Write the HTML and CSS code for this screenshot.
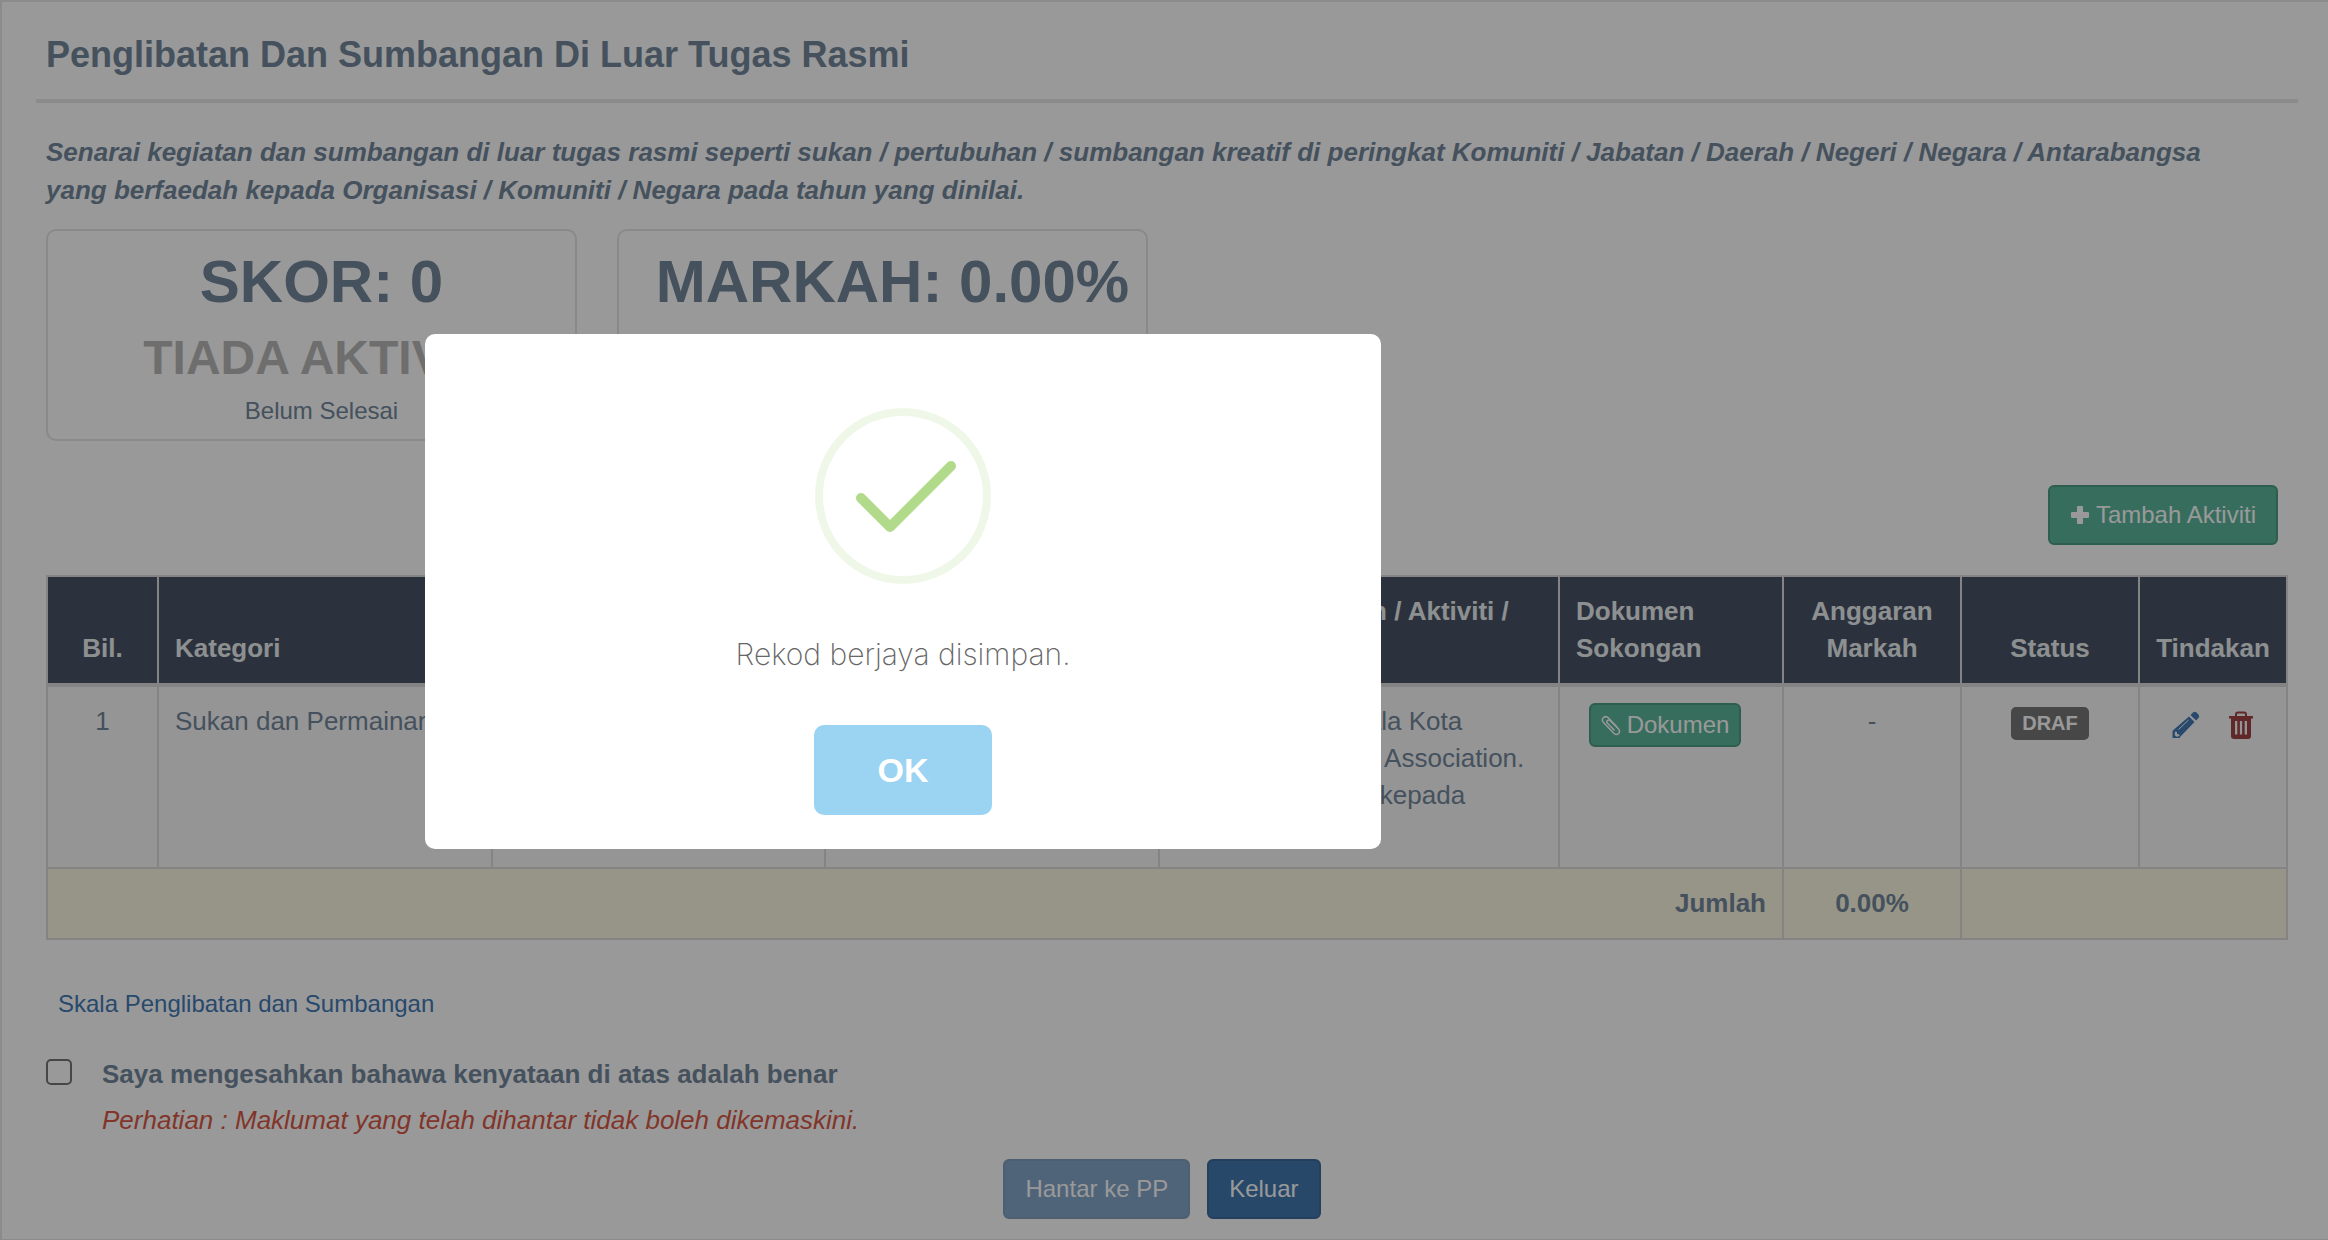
FILE: index.html
```html
<!DOCTYPE html>
<html lang="ms">
<head>
    <meta charset="UTF-8">
    <title>Penglibatan Dan Sumbangan Di Luar Tugas Rasmi</title>
    <link rel="stylesheet" href="styles.css">
</head>
<body>
<div class="panel">
    <h2 class="title">Penglibatan Dan Sumbangan Di Luar Tugas Rasmi</h2>
    <div class="content">
        <p class="intro">Senarai kegiatan dan sumbangan di luar tugas rasmi seperti sukan / pertubuhan / sumbangan kreatif di peringkat Komuniti / Jabatan / Daerah / Negeri / Negara / Antarabangsa yang berfaedah kepada Organisasi / Komuniti / Negara pada tahun yang dinilai.</p>

        <!-- skor -->
        <div class="tiles">
            <div class="tile">
                <div class="count">SKOR: 0</div>
                <h3>TIADA AKTIVITI</h3>
                <p>Belum Selesai</p>
            </div>
            <div class="tile">
                <div class="count">MARKAH: 0.00%</div>
            </div>
        </div>

        <div class="tools">
            <button type="button" class="btn btn-success">
                <svg class="icon-plus" viewBox="0 0 20 20"><path d="M8 1h4q1 0 1 1v5h5q1 0 1 1v4q0 1-1 1h-5v5q0 1-1 1H8q-1 0-1-1v-5H2q-1 0-1-1V8q0-1 1-1h5V2q0-1 1-1z"/></svg>
                Tambah Aktiviti
            </button>
        </div>

        <table class="table">
            <colgroup>
                <col class="c-bil"><col><col><col><col class="c-nama">
                <col class="c-dok"><col class="c-num"><col class="c-num"><col class="c-act">
            </colgroup>
            <thead>
            <tr>
                <th class="center">Bil.</th>
                <th>Kategori</th>
                <th></th>
                <th></th>
                <th>Nama Kejohanan / Aktiviti /<br>Sumbangan</th>
                <th>Dokumen Sokongan</th>
                <th class="center">Anggaran Markah</th>
                <th class="center">Status</th>
                <th class="center">Tindakan</th>
            </tr>
            </thead>
            <tbody>
            <tr>
                <td class="center">1</td>
                <td>Sukan dan Permainan</td>
                <td></td>
                <td></td>
                <td>Penyertaan di Piala Kota<br>Malaysia Football Association.<br>Sumbangan idea kepada<br>pasukan.</td>
                <td class="center">
                    <button type="button" class="btn btn-success btn-sm">
                        <svg class="icon-clip" viewBox="0 0 20 22"><path d="M16.500 13.500L7.500 4Q5 1.500 2.500 3.500Q0 6 2.500 8.500L13 19.500Q15.500 21.500 17.700 19.500Q19.500 17.500 17.500 15L9 6.500Q7.500 5.500 6.300 6.700Q5.200 8 6.500 9.300L13.500 16.500"/></svg>
                        Dokumen
                    </button>
                </td>
                <td class="center">-</td>
                <td class="center"><span class="label">DRAF</span></td>
                <td class="center">
                    <div class="actions">
                        <a href="#" class="edit" aria-label="Kemaskini">
                            <svg viewBox="0 0 28 28"><path d="M17 5.500L22.500 11L8.500 25.500L7.500 27H0.500V20L2 18.500zM18.500 4L21 1.500Q22.500 0 24.500 1.500L26.500 3.500Q28 5.500 26.500 7L24 9.500z"/><path class="cut" d="M3 20.500L5 21V23L7.300 23.500L7.500 25L4.500 25.800L2.700 24z"/><path class="ray" d="M6.500 18.500L16.500 9"/></svg>
                        </a>
                        <a href="#" class="remove" aria-label="Padam">
                            <svg viewBox="0 0 26 28"><path d="M1 5H25V7.500H1z"/><path class="line" d="M8 5V3.500Q8 1.500 10 1.500H16Q18 1.500 18 3.500V5"/><path d="M3 7H23V25Q23 28 20 28H6Q3 28 3 25z"/><path class="cut" d="M7 10H9.300V23.500H7zM11.900 10H14.100V23.500H11.900zM16.700 10H19V23.500H16.700z"/></svg>
                        </a>
                    </div>
                </td>
            </tr>
            </tbody>
            <tfoot>
            <tr>
                <td colspan="6" class="right">Jumlah</td>
                <td class="center">0.00%</td>
                <td colspan="2"></td>
            </tr>
            </tfoot>
        </table>

        <a href="#" class="skala">Skala Penglibatan dan Sumbangan</a>

        <div class="confirm">
            <input type="checkbox" id="sah">
            <div>
                <label for="sah">Saya mengesahkan bahawa kenyataan di atas adalah benar</label>
                <p class="warn">Perhatian : Maklumat yang telah dihantar tidak boleh dikemaskini.</p>
            </div>
        </div>

        <div class="buttons">
            <button type="button" class="btn btn-primary" disabled>Hantar ke PP</button>
            <button type="button" class="btn btn-primary">Keluar</button>
        </div>
    </div>
</div>

<!-- popup -->
<div class="overlay">
    <div class="modal" role="dialog" aria-modal="true" aria-labelledby="msg">
        <svg class="success" viewBox="0 0 176 176">
            <circle cx="88" cy="88" r="84"/>
            <path d="M46 90L75 119L136 58"/>
        </svg>
        <p id="msg">Rekod berjaya disimpan.</p>
        <button type="button" class="ok">OK</button>
    </div>
</div>
</body>
</html>
```
FILE: styles.css
```css
* {
    box-sizing: border-box;
    margin: 0;
    padding: 0;
}

body {
    background: #fff;
    color: #73879c;
    font-family: "Liberation Sans", Arial, sans-serif;
    font-size: 26px;
    line-height: 38px;
}

a {
    color: #437ab5;
    text-decoration: none;
}

button {
    font-family: inherit;
    cursor: pointer;
}

.panel {
    min-height: 100vh;
    padding: 32px 30px 17px 34px;
    border: 2px solid #e8e8ea;
    border-right: 0;
    border-bottom-width: 1px;
}

.title {
    padding: 0 10px 23px;
    border-bottom: 4px solid #e8e8ea;
    font-size: 36px;
    line-height: 42px;
}

.content {
    padding: 30px 10px 0;
}

.intro {
    padding-right: 40px;
    font-weight: bold;
    font-style: italic;
}

/* skor */
.tiles {
    display: flex;
    gap: 40px;
    margin-top: 20px;
}

.tile {
    width: 531px;
    height: 212px;
    padding: 18px 0 0 20px;
    border: 2px solid #e4e4e4;
    border-radius: 10px;
    text-align: center;
    white-space: nowrap;
}

.count {
    font-size: 60px;
    font-weight: bold;
    line-height: 66px;
}

.tile h3 {
    margin-top: 15px;
    color: #bab8b8;
    font-size: 48px;
    font-weight: bold;
    line-height: 56px;
}

.tile p {
    margin-top: 7px;
    font-size: 24px;
    line-height: 36px;
}

.tools {
    display: flex;
    justify-content: flex-end;
    margin: 44px 10px 30px;
}

/* button */
.btn {
    display: inline-flex;
    align-items: center;
    gap: 6px;
    height: 60px;
    padding: 0 20px;
    border: 2px solid;
    border-radius: 6px;
    color: #fff;
    font-size: 24px;
    white-space: nowrap;
}

.btn-success {
    background: #5cb69c;
    border-color: #4b9d85;
}

.btn-primary {
    background: #4378af;
    border-color: #3e6b99;
}

.btn:disabled {
    opacity: .65;
    cursor: default;
}

.btn-sm {
    height: 44px;
    margin-right: 12px;
    padding: 0 10px;
}

.icon-plus {
    width: 20px;
    height: 20px;
    fill: #fff;
}

.icon-clip {
    width: 20px;
    height: 22px;
    fill: none;
    stroke: #fff;
    stroke-width: 1.5;
}

/* table */
.table {
    width: 100%;
    border-collapse: collapse;
    table-layout: fixed;
}

.c-bil {
    width: 111px;
}

.c-nama {
    width: 400px;
}

.c-dok {
    width: 224px;
}

.c-num {
    width: 178px;
}

.c-act {
    width: 148px;
}

.table th,
.table td {
    padding: 16px;
    border: 2px solid #ddd;
    line-height: 37px;
    text-align: left;
    vertical-align: top;
}

.table th {
    border-bottom-width: 4px;
    background: #485367;
    color: #ecf0f1;
    vertical-align: bottom;
}

.table tbody td {
    background: #f9f9f9;
}

.table tfoot td {
    background: #fcf8e3;
    font-weight: bold;
}

.table .center {
    padding-right: 10px;
    padding-left: 10px;
    text-align: center;
}

.table .right {
    text-align: right;
}

.label {
    display: inline-block;
    padding: 0 11px;
    border-radius: 5px;
    background: #777;
    color: #fff;
    font-size: 20px;
    font-weight: bold;
    line-height: 33px;
}

.actions {
    display: flex;
    justify-content: center;
    gap: 28px;
    padding-top: 8px;
}

.actions svg {
    display: block;
    height: 28px;
}

.edit {
    fill: #437ab5;
}

.remove {
    fill: #a04344;
}

.actions .cut {
    fill: #f9f9f9;
}

.actions .ray {
    stroke: #f9f9f9;
}

.actions .line {
    fill: none;
    stroke: #a04344;
    stroke-width: 2;
}

.skala {
    display: block;
    margin: 46px 12px 33px;
    font-size: 24px;
    line-height: 36px;
}

.confirm {
    display: flex;
    gap: 30px;
}

.confirm input {
    appearance: none;
    width: 26px;
    height: 26px;
    margin-top: 4px;
    border: 2px solid #767676;
    border-radius: 5px;
}

.confirm label {
    font-weight: bold;
}

.warn {
    margin-top: 8px;
    color: #d85947;
    font-style: italic;
}

.buttons {
    display: flex;
    justify-content: center;
    gap: 17px;
    margin-top: 20px;
    padding-right: 10px;
}

/* popup */
.overlay {
    position: fixed;
    top: 0;
    right: 0;
    bottom: 0;
    left: 0;
    display: flex;
    align-items: center;
    justify-content: center;
    padding: 0 522px 57px 0;
    background: rgba(0, 0, 0, .4);
}

.modal {
    display: flex;
    flex-direction: column;
    align-items: center;
    width: 956px;
    padding: 74px 20px 34px;
    border-radius: 10px;
    background: #fff;
}

.success {
    width: 176px;
    height: 176px;
    fill: none;
    stroke-width: 8;
}

.success circle {
    stroke: #eff8e8;
}

.success path {
    stroke: #b1da8b;
    stroke-width: 10;
    stroke-linecap: round;
    stroke-linejoin: round;
}

.modal p {
    margin: 50px 0;
    color: #666;
    font-family: Inter, "Liberation Sans", sans-serif;
    font-size: 30px;
    font-weight: 200;
    line-height: 41px;
}

.ok {
    width: 178px;
    height: 90px;
    border: 0;
    border-radius: 10px;
    background: #9bd3f2;
    color: #fff;
    font-size: 34px;
    font-weight: bold;
}
```
